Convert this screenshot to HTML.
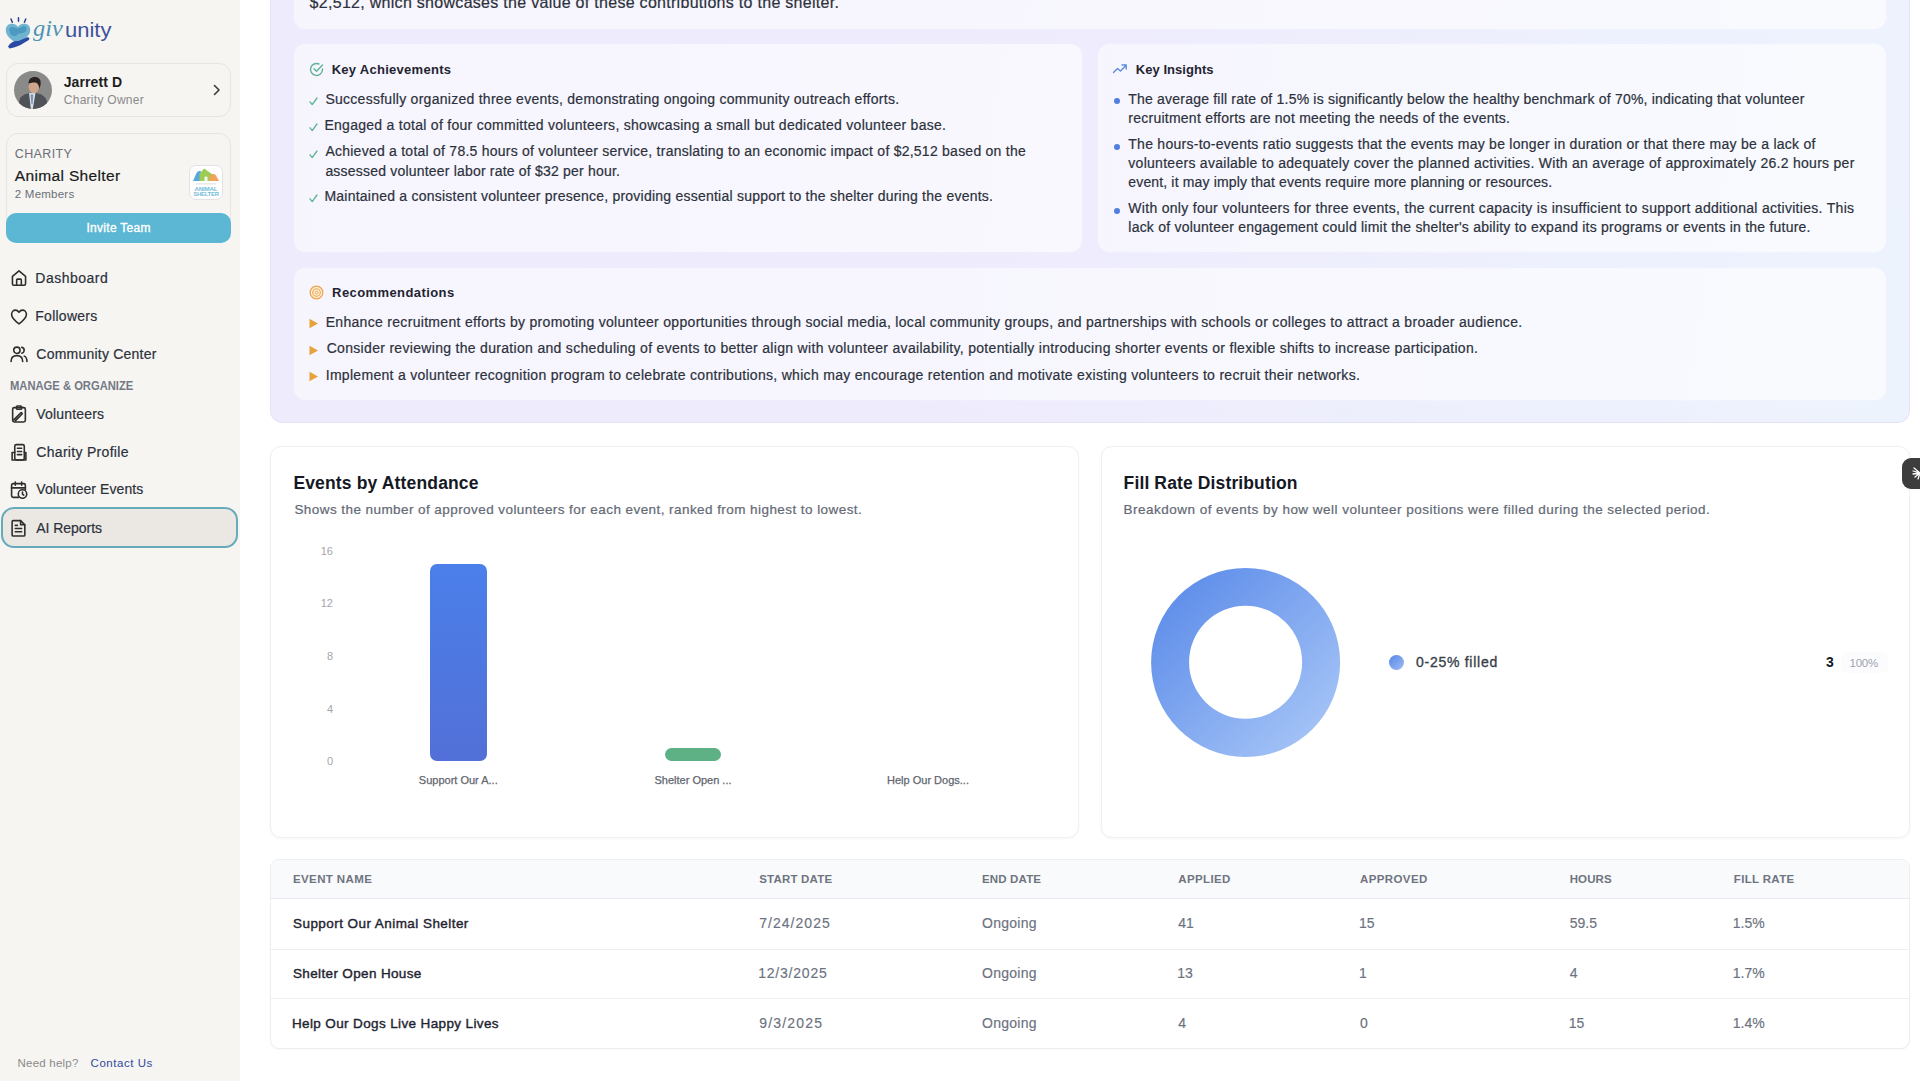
<!DOCTYPE html>
<html><head><meta charset="utf-8">
<style>
*{box-sizing:border-box;margin:0;padding:0}
html,body{width:1920px;height:1081px;overflow:hidden;background:#fff;font-family:"Liberation Sans",sans-serif;color:#1f2430}
.abs{position:absolute}
.t{position:absolute;white-space:nowrap;line-height:1}
#sb{position:absolute;left:0;top:0;width:240px;height:1081px;background:#f6f5f2}
</style></head>
<body>
<div id="sb"></div>
<svg class="abs" style="left:0;top:0" width="40" height="52" viewBox="0 0 40 52">
<path d="M11 19 L12.3 22.3 M18.5 17.8 L18.5 21.3 M25.8 19 L24.4 22.3" stroke="#2b3f8c" stroke-width="1.5" stroke-linecap="round"/>
<path d="M18 27 C15 22 5.8 22.5 5.8 30 C5.8 36 11.5 40 17 43.5 C23 40 30.3 36 30.3 30 C30.3 22.5 21 22 18 27 Z" fill="#6eb3cf"/>
<path d="M9 29 C11 26 14 27 16 28 C18 29.5 20 27.5 22.5 26.5 C25.5 25.5 28 28.5 25.5 31.5 C23 34 19 32.5 17 35 C15 37 12 36 10.5 34 Z" fill="#3f8fb8" opacity=".7"/>
<path d="M8 46.5 C10 42.5 14 40.5 18.5 41 L26.5 37.5 C28.8 36.8 30.3 38.5 28.8 40 L20.5 45 C16.5 47 12.5 48 9.5 48.5 Z" fill="#2a4aa6"/>
</svg>
<div class="t" style="left:33px;top:17px;font-size:23px;font-family:'Liberation Serif';font-style:italic;color:#4d93b3;transform:scaleX(1.06);transform-origin:0 0">giv</div>
<div class="t" style="left:64.5px;top:20px;font-size:20px;color:#2d4496;opacity:.92;transform:scaleX(1.1);transform-origin:0 0">unity</div>
<div class="abs" style="left:6px;top:63px;width:225px;height:54px;border:1px solid #e7e5e1;border-radius:12px"></div>
<svg class="abs" style="left:14px;top:71px" width="38" height="38" viewBox="0 0 38 38">
<defs><clipPath id="avc"><circle cx="19" cy="19" r="19"/></clipPath></defs>
<g clip-path="url(#avc)">
<rect width="38" height="38" fill="#8a8a88"/>
<path d="M4 38 L5.5 29 C6.5 25 10.5 23 15.5 22 L19 21.5 L24 22.5 C29 23.5 32 26.5 33 30.5 L34 38 Z" fill="#4f5256"/>
<path d="M15 22 L21.5 22 L18.8 38 L16.8 38 Z" fill="#d5dde6"/>
<path d="M16.6 23.5 L19.2 23.5 L18.6 33 L17.4 33 Z" fill="#7f93ad"/>
<ellipse cx="19.8" cy="15.8" rx="5.2" ry="6.4" fill="#cfa68c"/>
<path d="M14.5 12.5 C14.5 7.5 18 5.5 21.5 6 C25.5 6.5 27.5 9.5 26.5 14 L25.5 18 C25 14.5 24 12 21.5 11.5 C19 11.3 16.5 12 14.5 12.5 Z" fill="#2a221f"/>
</g></svg>
<div class="t" style="left:63.75px;top:75px;font-size:14px;font-weight:bold;color:#1e1e1e;letter-spacing:0.085px">Jarrett D</div>
<div class="t" style="left:63.75px;top:94px;font-size:12px;color:#8a8a8a;letter-spacing:0.276px">Charity Owner</div>
<svg class="abs" style="left:212px;top:84px" width="10" height="12" viewBox="0 0 10 12"><path d="M2.5 1.5 L7 6 L2.5 10.5" fill="none" stroke="#3a3a3a" stroke-width="1.6" stroke-linecap="round" stroke-linejoin="round"/></svg>
<div class="abs" style="left:6px;top:133px;width:225px;height:110px;border:1px solid #e7e5e1;border-radius:12px"></div>
<div class="t" style="left:14.75px;top:148px;font-size:12.5px;color:#6b6f76;letter-spacing:0.370px">CHARITY</div>
<div class="t" style="left:14.75px;top:168px;font-size:15.5px;color:#1a1a1a;-webkit-text-stroke:0.2px #1a1a1a;letter-spacing:0.355px">Animal Shelter</div>
<div class="t" style="left:14.75px;top:189px;font-size:11.5px;color:#6b6f76;letter-spacing:0.235px">2 Members</div>
<div class="abs" style="left:188.7px;top:165.3px;width:34.5px;height:34.5px;border-radius:7px;background:#fff;border:1px solid #e3e3e3"></div>
<svg class="abs" style="left:188.7px;top:165.3px" width="34" height="34" viewBox="0 0 34 34">
<path d="M4 16 L7 9 C8 6.5 10 5.5 12 6.5 L12.5 16 Z" fill="#5aa9dc"/>
<path d="M10.5 16 L10.5 9 L15 3.5 L24.5 10 L24.5 16 Z" fill="#9dcc55"/>
<path d="M15.5 16 L15.5 12.5 C15.5 11 18.5 11 18.5 12.5 L18.5 16 Z" fill="#f2f9e8"/>
<path d="M20 16 L21 11 C22 8.5 25 8.5 27 10.5 L30 16 Z" fill="#f0a35a"/>
<rect x="7" y="18.5" width="20" height="0.8" fill="#888" opacity=".35"/>
<text x="17" y="25.8" text-anchor="middle" font-family="Liberation Sans" font-weight="bold" font-size="6.2" fill="#74bdd8" letter-spacing="-0.2">ANIMAL</text>
<text x="17" y="31" text-anchor="middle" font-family="Liberation Sans" font-weight="bold" font-size="6" fill="#74bdd8" letter-spacing="-0.3">SHELTER</text>
</svg>
<div class="abs" style="left:6px;top:213px;width:225px;height:30px;border-radius:10px;background:#5bb7d3"></div>
<div class="t" style="left:86.50px;top:222px;font-size:12px;color:#fff;-webkit-text-stroke:0.35px #fff;letter-spacing:0.274px">Invite Team</div>
<svg class="abs" style="left:10px;top:268.8px" width="18" height="18" viewBox="0 0 17 17"><path d="M2.3 7 L8.5 1.8 L14.7 7 V14 C14.7 14.8 14.2 15.3 13.4 15.3 H3.6 C2.8 15.3 2.3 14.8 2.3 14 Z" fill="none" stroke="#2e2e2e" stroke-width="1.5" stroke-linecap="round" stroke-linejoin="round"/><path d="M6.3 15.3 V10.3 C6.3 9.9 6.6 9.6 7 9.6 H10 C10.4 9.6 10.7 9.9 10.7 10.3 V15.3" fill="none" stroke="#2e2e2e" stroke-width="1.5" stroke-linecap="round" stroke-linejoin="round"/></svg>
<div class="t" style="left:35.30px;top:271px;font-size:14px;color:#2c313b;-webkit-text-stroke:0.2px #2c313b;letter-spacing:0.487px">Dashboard</div>
<svg class="abs" style="left:10px;top:308px" width="18" height="18" viewBox="0 0 17 17"><path d="M8.5 15 C5 12.5 1.5 10 1.5 6 C1.5 3.5 3.3 2 5.2 2 C6.8 2 7.8 3 8.5 4 C9.2 3 10.2 2 11.8 2 C13.7 2 15.5 3.5 15.5 6 C15.5 10 12 12.5 8.5 15Z" fill="none" stroke="#2e2e2e" stroke-width="1.5" stroke-linecap="round" stroke-linejoin="round"/></svg>
<div class="t" style="left:35.30px;top:309px;font-size:14px;color:#2c313b;-webkit-text-stroke:0.2px #2c313b;letter-spacing:0.250px">Followers</div>
<svg class="abs" style="left:10px;top:345px" width="18" height="18" viewBox="0 0 17 17"><circle cx="6.5" cy="5" r="3" fill="none" stroke="#2e2e2e" stroke-width="1.5" stroke-linecap="round" stroke-linejoin="round"/><path d="M1 15.5 C1 11.5 3.5 10 6.5 10 C9.5 10 12 11.5 12 15.5" fill="none" stroke="#2e2e2e" stroke-width="1.5" stroke-linecap="round" stroke-linejoin="round"/><path d="M11 2.2 C12.8 2.6 13.6 4 13.3 5.6 C13.1 6.8 12.2 7.6 11.2 7.8" fill="none" stroke="#2e2e2e" stroke-width="1.5" stroke-linecap="round" stroke-linejoin="round"/><path d="M13.5 10.5 C15.2 11.2 16 12.8 16 15.5" fill="none" stroke="#2e2e2e" stroke-width="1.5" stroke-linecap="round" stroke-linejoin="round"/></svg>
<div class="t" style="left:36.30px;top:347px;font-size:14px;color:#2c313b;-webkit-text-stroke:0.2px #2c313b;letter-spacing:0.224px">Community Center</div>
<div class="t" style="left:10.10px;top:380px;font-size:12px;font-weight:bold;color:#737985;transform:scaleX(0.9341);transform-origin:0.00px 0">MANAGE &amp; ORGANIZE</div>
<div class="abs" style="left:0.5px;top:507px;width:237.5px;height:41px;border:2px solid #66aabb;border-radius:13px;background:#ebe8e3"></div>
<svg class="abs" style="left:10px;top:405px" width="18" height="18" viewBox="0 0 17 17"><rect x="2.5" y="2.5" width="12" height="13.5" rx="1.5" fill="none" stroke="#2e2e2e" stroke-width="1.5" stroke-linecap="round" stroke-linejoin="round"/><rect x="6" y="1" width="5" height="3" rx="1" fill="none" stroke="#2e2e2e" stroke-width="1.5" stroke-linecap="round" stroke-linejoin="round"/><path d="M3.5 14 L10 7.5 C10.8 6.7 12 7.9 11.2 8.7 L5 15" fill="none" stroke="#2e2e2e" stroke-width="1.5" stroke-linecap="round" stroke-linejoin="round"/></svg>
<div class="t" style="left:36.30px;top:407px;font-size:14px;color:#2c313b;-webkit-text-stroke:0.2px #2c313b;letter-spacing:0.171px">Volunteers</div>
<svg class="abs" style="left:10px;top:443px" width="18" height="18" viewBox="0 0 17 17"><rect x="4.5" y="1.5" width="9" height="14.5" rx="1.5" fill="none" stroke="#2e2e2e" stroke-width="1.5" stroke-linecap="round" stroke-linejoin="round"/><path d="M4.5 9 H2 V16 H15 V9 H13.5" fill="none" stroke="#2e2e2e" stroke-width="1.5" stroke-linecap="round" stroke-linejoin="round"/><path d="M7 5 H11 M7 8 H11 M7 11 H11" fill="none" stroke="#2e2e2e" stroke-width="1.5" stroke-linecap="round" stroke-linejoin="round"/></svg>
<div class="t" style="left:36.30px;top:445px;font-size:14px;color:#2c313b;-webkit-text-stroke:0.2px #2c313b;letter-spacing:0.305px">Charity Profile</div>
<svg class="abs" style="left:10px;top:481px" width="18" height="18" viewBox="0 0 17 17"><path d="M8 15.5 H3 C2.2 15.5 1.5 14.8 1.5 14 V4 C1.5 3.2 2.2 2.5 3 2.5 H13 C13.8 2.5 14.5 3.2 14.5 4 V8" fill="none" stroke="#2e2e2e" stroke-width="1.5" stroke-linecap="round" stroke-linejoin="round"/><path d="M5 1 V4 M11 1 V4 M1.5 6.5 H14.5" fill="none" stroke="#2e2e2e" stroke-width="1.5" stroke-linecap="round" stroke-linejoin="round"/><circle cx="11.8" cy="12.3" r="4" fill="none" stroke="#2e2e2e" stroke-width="1.5" stroke-linecap="round" stroke-linejoin="round"/><path d="M11.8 10.5 V12.5 L13 13.3" fill="none" stroke="#2e2e2e" stroke-width="1.5" stroke-linecap="round" stroke-linejoin="round"/></svg>
<div class="t" style="left:36.30px;top:482px;font-size:14px;color:#2c313b;-webkit-text-stroke:0.2px #2c313b;letter-spacing:0.070px">Volunteer Events</div>
<svg class="abs" style="left:10px;top:518.5px" width="18" height="18" viewBox="0 0 17 17"><path d="M3 1.5 H10 L14 5.5 V15 C14 15.6 13.6 16 13 16 H3 C2.4 16 2 15.6 2 15 V2.5 C2 1.9 2.4 1.5 3 1.5Z" fill="none" stroke="#2e2e2e" stroke-width="1.5" stroke-linecap="round" stroke-linejoin="round"/><path d="M10 1.5 V5.5 H14 M5 9 H11 M5 12 H11 M5 6 H7" fill="none" stroke="#2e2e2e" stroke-width="1.5" stroke-linecap="round" stroke-linejoin="round"/></svg>
<div class="t" style="left:36.30px;top:521px;font-size:14px;color:#2c313b;-webkit-text-stroke:0.2px #2c313b;letter-spacing:-0.049px">AI Reports</div>
<div class="t" style="left:17.50px;top:1058px;font-size:11.5px;color:#8a8a8a;letter-spacing:0.230px">Need help?</div>
<div class="t" style="left:90.60px;top:1058px;font-size:11.5px;color:#3149a0;letter-spacing:0.530px">Contact Us</div>
<div class="abs" style="left:270px;top:-700px;width:1640px;height:1122.5px;border:1px solid #e3e1f6;border-radius:12px;background:linear-gradient(100deg,#eeebfd 0%,#eeebfd 45%,#edf3fd 100%)"></div>
<div class="abs" style="left:294px;top:-200px;width:1592px;height:229px;background:linear-gradient(90deg,rgba(255,255,255,0.5),rgba(255,255,255,0.62));border-radius:12px;box-shadow:0 0 2px rgba(255,255,255,0.6)"></div>
<div class="t" style="left:309.60px;top:-5px;font-size:16px;color:#2c313b;-webkit-text-stroke:0.2px #2c313b;letter-spacing:0.290px">$2,512, which showcases the value of these contributions to the shelter.</div>
<div class="abs" style="left:294px;top:44px;width:788px;height:208px;background:linear-gradient(90deg,rgba(255,255,255,0.5),rgba(255,255,255,0.62));border-radius:12px;box-shadow:0 0 2px rgba(255,255,255,0.6)"></div>
<div class="abs" style="left:1098px;top:44px;width:788px;height:208px;background:linear-gradient(90deg,rgba(255,255,255,0.5),rgba(255,255,255,0.62));border-radius:12px;box-shadow:0 0 2px rgba(255,255,255,0.6)"></div>
<div class="abs" style="left:294px;top:268px;width:1592px;height:132px;background:linear-gradient(90deg,rgba(255,255,255,0.5),rgba(255,255,255,0.62));border-radius:12px;box-shadow:0 0 2px rgba(255,255,255,0.6)"></div>
<svg class="abs" style="left:309px;top:61.5px" width="15" height="15" viewBox="0 0 15 15"><path d="M13.5 6.9 V7.5 A6 6 0 1 1 10 2" fill="none" stroke="#5fb393" stroke-width="1.4" stroke-linecap="round"/><path d="M5 6.8 L7.5 9.3 L13.5 3" fill="none" stroke="#5fb393" stroke-width="1.4" stroke-linecap="round" stroke-linejoin="round"/></svg>
<div class="t" style="left:331.70px;top:63px;font-size:13px;font-weight:bold;color:#1f2430;letter-spacing:0.278px">Key Achievements</div>
<svg class="abs" style="left:309px;top:96.6px" width="9" height="9" viewBox="0 0 9 9"><path d="M1 4.8 L3.2 7.6 L8 1" fill="none" stroke="#5fb393" stroke-width="1.3" stroke-linecap="round" stroke-linejoin="round"/></svg>
<div class="t" style="left:325.40px;top:92px;font-size:14px;color:#2c313b;-webkit-text-stroke:0.2px #2c313b;letter-spacing:0.270px">Successfully organized three events, demonstrating ongoing community outreach efforts.</div>
<svg class="abs" style="left:309px;top:123.1px" width="9" height="9" viewBox="0 0 9 9"><path d="M1 4.8 L3.2 7.6 L8 1" fill="none" stroke="#5fb393" stroke-width="1.3" stroke-linecap="round" stroke-linejoin="round"/></svg>
<div class="t" style="left:324.40px;top:118px;font-size:14px;color:#2c313b;-webkit-text-stroke:0.2px #2c313b;letter-spacing:0.282px">Engaged a total of four committed volunteers, showcasing a small but dedicated volunteer base.</div>
<svg class="abs" style="left:309px;top:149.5px" width="9" height="9" viewBox="0 0 9 9"><path d="M1 4.8 L3.2 7.6 L8 1" fill="none" stroke="#5fb393" stroke-width="1.3" stroke-linecap="round" stroke-linejoin="round"/></svg>
<div class="t" style="left:325.40px;top:144px;font-size:14px;color:#2c313b;-webkit-text-stroke:0.2px #2c313b;letter-spacing:0.244px">Achieved a total of 78.5 hours of volunteer service, translating to an economic impact of $2,512 based on the</div>
<div class="t" style="left:325.40px;top:164px;font-size:14px;color:#2c313b;-webkit-text-stroke:0.2px #2c313b;letter-spacing:0.197px">assessed volunteer labor rate of $32 per hour.</div>
<svg class="abs" style="left:309px;top:194.4px" width="9" height="9" viewBox="0 0 9 9"><path d="M1 4.8 L3.2 7.6 L8 1" fill="none" stroke="#5fb393" stroke-width="1.3" stroke-linecap="round" stroke-linejoin="round"/></svg>
<div class="t" style="left:324.40px;top:189px;font-size:14px;color:#2c313b;-webkit-text-stroke:0.2px #2c313b;letter-spacing:0.232px">Maintained a consistent volunteer presence, providing essential support to the shelter during the events.</div>
<svg class="abs" style="left:1112px;top:62px" width="16" height="14" viewBox="0 0 16 14"><path d="M1.5 10.5 L5.5 6.5 L8.5 9 L14 3.5" fill="none" stroke="#5b8be0" stroke-width="1.4" stroke-linecap="round" stroke-linejoin="round"/><path d="M10 3 H14.2 V7" fill="none" stroke="#5b8be0" stroke-width="1.4" stroke-linecap="round" stroke-linejoin="round"/></svg>
<div class="t" style="left:1135.80px;top:63px;font-size:13px;font-weight:bold;color:#1f2430;letter-spacing:0.040px">Key Insights</div>
<div class="abs" style="left:1113.5px;top:98.39999999999999px;width:6px;height:6px;border-radius:50%;background:#4f80de"></div>
<div class="t" style="left:1128.30px;top:92px;font-size:14px;color:#2c313b;-webkit-text-stroke:0.2px #2c313b;letter-spacing:0.203px">The average fill rate of 1.5% is significantly below the healthy benchmark of 70%, indicating that volunteer</div>
<div class="t" style="left:1128.30px;top:111px;font-size:14px;color:#2c313b;-webkit-text-stroke:0.2px #2c313b;letter-spacing:0.248px">recruitment efforts are not meeting the needs of the events.</div>
<div class="abs" style="left:1113.5px;top:143.8px;width:6px;height:6px;border-radius:50%;background:#4f80de"></div>
<div class="t" style="left:1128.30px;top:137px;font-size:14px;color:#2c313b;-webkit-text-stroke:0.2px #2c313b;letter-spacing:0.264px">The hours-to-events ratio suggests that the events may be longer in duration or that there may be a lack of</div>
<div class="t" style="left:1128.30px;top:156px;font-size:14px;color:#2c313b;-webkit-text-stroke:0.2px #2c313b;letter-spacing:0.280px">volunteers available to adequately cover the planned activities. With an average of approximately 26.2 hours per</div>
<div class="t" style="left:1128.30px;top:175px;font-size:14px;color:#2c313b;-webkit-text-stroke:0.2px #2c313b;letter-spacing:0.149px">event, it may imply that events require more planning or resources.</div>
<div class="abs" style="left:1113.5px;top:207.8px;width:6px;height:6px;border-radius:50%;background:#4f80de"></div>
<div class="t" style="left:1128.30px;top:201px;font-size:14px;color:#2c313b;-webkit-text-stroke:0.2px #2c313b;letter-spacing:0.299px">With only four volunteers for three events, the current capacity is insufficient to support additional activities. This</div>
<div class="t" style="left:1128.30px;top:220px;font-size:14px;color:#2c313b;-webkit-text-stroke:0.2px #2c313b;letter-spacing:0.223px">lack of volunteer engagement could limit the shelter&#39;s ability to expand its programs or events in the future.</div>
<svg class="abs" style="left:308.5px;top:284.5px" width="15" height="15" viewBox="0 0 15 15"><circle cx="7.5" cy="7.5" r="6.3" fill="#fdf0dc" stroke="#eba64a" stroke-width="1.3"/><circle cx="7.5" cy="7.5" r="3.8" fill="none" stroke="#eba64a" stroke-width="1.1"/><circle cx="7.5" cy="7.5" r="1.5" fill="none" stroke="#eba64a" stroke-width="1"/></svg>
<div class="t" style="left:332.10px;top:286px;font-size:13px;font-weight:bold;color:#1f2430;letter-spacing:0.409px">Recommendations</div>
<svg class="abs" style="left:309px;top:318.1px" width="10" height="11" viewBox="0 0 10 11"><path d="M0.5 0.8 L9 5.5 L0.5 10.2 Z" fill="#e8a23a"/></svg>
<div class="t" style="left:325.70px;top:315px;font-size:14px;color:#2c313b;-webkit-text-stroke:0.2px #2c313b;letter-spacing:0.307px">Enhance recruitment efforts by promoting volunteer opportunities through social media, local community groups, and partnerships with schools or colleges to attract a broader audience.</div>
<svg class="abs" style="left:309px;top:344.8px" width="10" height="11" viewBox="0 0 10 11"><path d="M0.5 0.8 L9 5.5 L0.5 10.2 Z" fill="#e8a23a"/></svg>
<div class="t" style="left:326.70px;top:341px;font-size:14px;color:#2c313b;-webkit-text-stroke:0.2px #2c313b;letter-spacing:0.310px">Consider reviewing the duration and scheduling of events to better align with volunteer availability, potentially introducing shorter events or flexible shifts to increase participation.</div>
<svg class="abs" style="left:309px;top:371.3px" width="10" height="11" viewBox="0 0 10 11"><path d="M0.5 0.8 L9 5.5 L0.5 10.2 Z" fill="#e8a23a"/></svg>
<div class="t" style="left:325.70px;top:368px;font-size:14px;color:#2c313b;-webkit-text-stroke:0.2px #2c313b;letter-spacing:0.300px">Implement a volunteer recognition program to celebrate contributions, which may encourage retention and motivate existing volunteers to recruit their networks.</div>
<div class="abs" style="left:270px;top:446px;width:809px;height:392px;background:#fff;border:1px solid #f0f0f0;border-radius:11px;box-shadow:0 1px 3px rgba(0,0,0,0.035)"></div>
<div class="abs" style="left:1101px;top:446px;width:809px;height:392px;background:#fff;border:1px solid #f0f0f0;border-radius:11px;box-shadow:0 1px 3px rgba(0,0,0,0.035)"></div>
<div class="t" style="left:293.40px;top:475px;font-size:17.5px;font-weight:bold;color:#141824;letter-spacing:0.153px">Events by Attendance</div>
<div class="t" style="left:294.40px;top:503px;font-size:13.5px;color:#646a75;-webkit-text-stroke:0.22px #646a75;letter-spacing:0.433px">Shows the number of approved volunteers for each event, ranked from highest to lowest.</div>
<div class="t" style="left:290px;width:43px;text-align:right;top:545.5px;font-size:11px;color:#a3a6ab">16</div>
<div class="t" style="left:290px;width:43px;text-align:right;top:598.2px;font-size:11px;color:#a3a6ab">12</div>
<div class="t" style="left:290px;width:43px;text-align:right;top:651.1px;font-size:11px;color:#a3a6ab">8</div>
<div class="t" style="left:290px;width:43px;text-align:right;top:704.0px;font-size:11px;color:#a3a6ab">4</div>
<div class="t" style="left:290px;width:43px;text-align:right;top:755.5px;font-size:11px;color:#a3a6ab">0</div>
<div class="abs" style="left:430px;top:564px;width:57px;height:197px;border-radius:7px;background:linear-gradient(180deg,#4b7fea,#5270d7)"></div>
<div class="abs" style="left:665px;top:748px;width:56px;height:13px;border-radius:7px;background:#5db184"></div>
<div class="t" style="left:378.3px;width:160px;text-align:center;top:774.6885px;font-size:11px;color:#5f6670;-webkit-text-stroke:0.25px #5f6670">Support Our A...</div>
<div class="t" style="left:613px;width:160px;text-align:center;top:774.6885px;font-size:11px;color:#5f6670;-webkit-text-stroke:0.25px #5f6670">Shelter Open ...</div>
<div class="t" style="left:848px;width:160px;text-align:center;top:774.6885px;font-size:11px;color:#5f6670;-webkit-text-stroke:0.25px #5f6670">Help Our Dogs...</div>
<div class="t" style="left:1123.60px;top:475px;font-size:17.5px;font-weight:bold;color:#141824;letter-spacing:0.128px">Fill Rate Distribution</div>
<div class="t" style="left:1123.60px;top:503px;font-size:13.5px;color:#646a75;-webkit-text-stroke:0.22px #646a75;letter-spacing:0.477px">Breakdown of events by how well volunteer positions were filled during the selected period.</div>
<svg class="abs" style="left:1150px;top:567px" width="192" height="192" viewBox="0 0 192 192">
<defs><linearGradient id="dg" x1="0" y1="0" x2="1" y2="1"><stop offset="0" stop-color="#5586e8"/><stop offset="1" stop-color="#aecbf8"/></linearGradient></defs>
<path fill="url(#dg)" fill-rule="evenodd" d="M95.6 1 A94.5 94.5 0 1 1 95.6 190 A94.5 94.5 0 1 1 95.6 1 Z M95.6 38.7 A56.5 56.5 0 1 0 95.6 151.7 A56.5 56.5 0 1 0 95.6 38.7 Z"/>
</svg>
<div class="abs" style="left:1389px;top:654.9px;width:15px;height:15px;border-radius:50%;background:linear-gradient(135deg,#5586e8,#9fbdf3)"></div>
<div class="t" style="left:1416.00px;top:655px;font-size:14px;color:#3a3f4a;-webkit-text-stroke:0.35px #3a3f4a;letter-spacing:0.730px">0-25% filled</div>
<div class="abs" style="left:1841px;top:652px;width:47px;height:21px;border-radius:6px;background:#fcfcfe"></div>
<div class="t" style="left:1826.00px;top:655px;font-size:14px;font-weight:bold;color:#111827">3</div>
<div class="t" style="left:1849.60px;top:658px;font-size:11.5px;color:#9ca3af;letter-spacing:-0.262px">100%</div>
<div class="abs" style="left:1902px;top:457.5px;width:30px;height:31px;border-radius:9px;background:#3d3d3d"></div>
<svg class="abs" style="left:1912px;top:465px" width="8" height="16" viewBox="0 0 8 16"><path d="M8 8 L2 3 M8 8 L1 6 M8 8 L1 9 M8 8 L3 12 M8 8 L6 14" stroke="#fff" stroke-width="1.3" stroke-linecap="round"/></svg>
<div class="abs" style="left:270px;top:859px;width:1640px;height:190px;background:#fff;border:1px solid #eceef1;border-radius:9px;overflow:hidden;box-shadow:0 1px 2px rgba(0,0,0,0.03)"><div class="abs" style="left:0;top:0;width:1640px;height:39px;background:#f9fafb;border-bottom:1px solid #e8eaed"></div><div class="abs" style="left:0;top:89px;width:1640px;height:1px;background:#eceef1"></div><div class="abs" style="left:0;top:138px;width:1640px;height:1px;background:#eceef1"></div></div>
<div class="t" style="left:293.00px;top:874px;font-size:11.5px;font-weight:bold;color:#6e7480;letter-spacing:0.386px">EVENT NAME</div>
<div class="t" style="left:759.20px;top:874px;font-size:11.5px;font-weight:bold;color:#6e7480;letter-spacing:0.205px">START DATE</div>
<div class="t" style="left:982.00px;top:874px;font-size:11.5px;font-weight:bold;color:#6e7480;letter-spacing:0.149px">END DATE</div>
<div class="t" style="left:1178.30px;top:874px;font-size:11.5px;font-weight:bold;color:#6e7480;letter-spacing:0.361px">APPLIED</div>
<div class="t" style="left:1360.00px;top:874px;font-size:11.5px;font-weight:bold;color:#6e7480;letter-spacing:0.395px">APPROVED</div>
<div class="t" style="left:1569.70px;top:874px;font-size:11.5px;font-weight:bold;color:#6e7480;letter-spacing:0.110px">HOURS</div>
<div class="t" style="left:1733.80px;top:874px;font-size:11.5px;font-weight:bold;color:#6e7480;letter-spacing:0.332px">FILL RATE</div>
<div class="t" style="left:293.00px;top:917px;font-size:13.5px;color:#1f2430;-webkit-text-stroke:0.4px #1f2430;letter-spacing:0.441px">Support Our Animal Shelter</div>
<div class="t" style="left:759.20px;top:916px;font-size:14px;color:#6b7280;-webkit-text-stroke:0.15px #6b7280;letter-spacing:1.038px">7/24/2025</div>
<div class="t" style="left:982.00px;top:916px;font-size:14px;color:#6b7280;-webkit-text-stroke:0.15px #6b7280;letter-spacing:0.276px">Ongoing</div>
<div class="t" style="left:1178.30px;top:916px;font-size:14px;color:#6b7280;-webkit-text-stroke:0.15px #6b7280">41</div>
<div class="t" style="left:1359.00px;top:916px;font-size:14px;color:#6b7280;-webkit-text-stroke:0.15px #6b7280">15</div>
<div class="t" style="left:1569.70px;top:916px;font-size:14px;color:#6b7280;-webkit-text-stroke:0.15px #6b7280">59.5</div>
<div class="t" style="left:1732.80px;top:916px;font-size:14px;color:#6b7280;-webkit-text-stroke:0.15px #6b7280">1.5%</div>
<div class="t" style="left:293.00px;top:967px;font-size:13.5px;color:#1f2430;-webkit-text-stroke:0.4px #1f2430;letter-spacing:0.352px">Shelter Open House</div>
<div class="t" style="left:758.20px;top:966px;font-size:14px;color:#6b7280;-webkit-text-stroke:0.15px #6b7280;letter-spacing:0.788px">12/3/2025</div>
<div class="t" style="left:982.00px;top:966px;font-size:14px;color:#6b7280;-webkit-text-stroke:0.15px #6b7280;letter-spacing:0.276px">Ongoing</div>
<div class="t" style="left:1177.30px;top:966px;font-size:14px;color:#6b7280;-webkit-text-stroke:0.15px #6b7280">13</div>
<div class="t" style="left:1359.00px;top:966px;font-size:14px;color:#6b7280;-webkit-text-stroke:0.15px #6b7280">1</div>
<div class="t" style="left:1569.70px;top:966px;font-size:14px;color:#6b7280;-webkit-text-stroke:0.15px #6b7280">4</div>
<div class="t" style="left:1732.80px;top:966px;font-size:14px;color:#6b7280;-webkit-text-stroke:0.15px #6b7280">1.7%</div>
<div class="t" style="left:292.00px;top:1017px;font-size:13.5px;color:#1f2430;-webkit-text-stroke:0.4px #1f2430;letter-spacing:0.369px">Help Our Dogs Live Happy Lives</div>
<div class="t" style="left:759.20px;top:1016px;font-size:14px;color:#6b7280;-webkit-text-stroke:0.15px #6b7280;letter-spacing:1.184px">9/3/2025</div>
<div class="t" style="left:982.00px;top:1016px;font-size:14px;color:#6b7280;-webkit-text-stroke:0.15px #6b7280;letter-spacing:0.276px">Ongoing</div>
<div class="t" style="left:1178.30px;top:1016px;font-size:14px;color:#6b7280;-webkit-text-stroke:0.15px #6b7280">4</div>
<div class="t" style="left:1360.00px;top:1016px;font-size:14px;color:#6b7280;-webkit-text-stroke:0.15px #6b7280">0</div>
<div class="t" style="left:1568.70px;top:1016px;font-size:14px;color:#6b7280;-webkit-text-stroke:0.15px #6b7280">15</div>
<div class="t" style="left:1732.80px;top:1016px;font-size:14px;color:#6b7280;-webkit-text-stroke:0.15px #6b7280">1.4%</div>
</body></html>
